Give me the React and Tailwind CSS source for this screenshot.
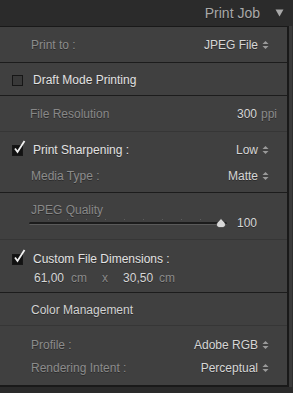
import React from 'react';

const font = { fontFamily: '"Liberation Sans", Arial, sans-serif' };

const Stepper = () => (
  <svg width="7" height="10" viewBox="0 0 7 10" className="ml-[4px] shrink-0">
    <path d="M3.5 1 L6.5 4 L0.5 4 Z" fill="#9a9a9a" />
    <path d="M3.5 9 L6.5 6 L0.5 6 Z" fill="#9a9a9a" />
  </svg>
);

const Checkbox = ({ checked }) => (
  <div className="relative w-[11px] h-[11px] shrink-0">
    <div
      className={
        'absolute inset-0 border border-[#161616] ' +
        (checked ? 'bg-[#121212]' : 'bg-[#393939]')
      }
    />
    {checked && (
      <svg width="14" height="15" viewBox="0 0 14 15" className="absolute left-[1px] top-[-5px]">
        <path d="M2 8.5 L4.5 12 L11.5 1" stroke="#f2f2f2" strokeWidth="1.8" fill="none" />
      </svg>
    )}
  </div>
);

const SelectRow = ({ label, value, className = '' }) => (
  <div className={'flex items-center justify-between pl-[31px] pr-[18px] ' + className}>
    <span className="text-[#8c8c8c]">{label}</span>
    <span className="flex items-center text-[#d6d6d6]">
      {value}
      <Stepper />
    </span>
  </div>
);

const Slider = () => {
  const ticks = [48, 67, 86, 105, 124, 143, 162, 181, 200];
  return (
    <div className="relative w-[198px] h-[12px]">
      <div className="absolute left-0 right-0 top-[5px] h-[3px] rounded-full bg-[#1c1c1c] border-b border-[#5a5a5a]" />
      {ticks.map((t) => (
        <div key={t} className="absolute top-[2px] w-px h-px bg-[#5c5c5c]" style={{ left: t - 29 }} />
      ))}
      <svg width="12" height="11" viewBox="0 0 12 11" className="absolute left-[186px] top-[1px]">
        <path d="M6 0.5 L10 5 Q11.5 8.5 8 9.5 L4 9.5 Q0.5 8.5 2 5 Z" fill="#d8d8d8" stroke="#2a2a2a" strokeWidth="0.6" />
      </svg>
    </div>
  );
};

export default function App() {
  return (
    <div className="w-[293px] h-[393px] bg-[#2a2a2a] text-[12px] overflow-hidden [text-shadow:0_1px_0_rgba(0,0,0,0.35)]" style={font}>
      <div className="h-[26px] flex items-center justify-end pr-[9px] bg-[#2b2b2b]">
        <span className="text-[14px] text-[#a9a9a9]">Print Job</span>
        <svg width="9" height="8" viewBox="0 0 9 8" className="ml-[15px]">
          <path d="M0.5 0.5 L8.5 0.5 L4.5 7.5 Z" fill="#a8a8a8" />
        </svg>
      </div>
      <div className="flex bg-[#3a3a3a]">
        <div className="w-[289px] bg-[#404040] border-t border-r-2 border-b-2 border-[#191919] flex flex-col">
          <SelectRow label="Print to :" value="JPEG File" className="h-[36px] border-b border-[#1c1c1c]" />

          <div className="h-[33px] flex items-center pl-[12px] pt-[2px] border-b border-[#1c1c1c]">
            <Checkbox />
            <span className="ml-[10px] text-[#e2e2e2]">Draft Mode Printing</span>
          </div>

          <div className="h-[36px] flex items-center justify-between pl-[30px] pr-[10px] pt-[1px] border-b border-[#363636]">
            <span className="text-[#888888]">File Resolution</span>
            <span>
              <span className="text-[#d6d6d6]">300</span>
              <span className="ml-[4px] text-[#8a8a8a]">ppi</span>
            </span>
          </div>

          <div className="h-[61px] flex flex-col border-b border-[#1c1c1c]">
            <div className="h-[34px] flex items-center justify-between pl-[12px] pr-[18px] pt-[2px]">
              <div className="flex items-center">
                <Checkbox checked />
                <span className="ml-[10px] text-[#e2e2e2]">Print Sharpening :</span>
              </div>
              <span className="flex items-center text-[#d6d6d6]">
                Low
                <Stepper />
              </span>
            </div>
            <SelectRow label="Media Type :" value="Matte" className="h-[18px] pl-[30px] mt-[1px]" />
          </div>

          <div className="h-[47px] flex flex-col border-b border-[#363636]">
            <div className="pl-[31px] pt-[10px] text-[#888888] leading-[14px]">JPEG Quality</div>
            <div className="flex items-center pl-[29px] mt-[-3px]">
              <Slider />
              <span className="ml-[10px] text-[#d6d6d6]">100</span>
            </div>
          </div>

          <div className="h-[53px] flex flex-col border-b border-[#1c1c1c]">
            <div className="flex items-center pl-[12px] pt-[11px] h-[27px]">
              <Checkbox checked />
              <span className="ml-[10px] text-[#e2e2e2]">Custom File Dimensions :</span>
            </div>
            <div className="flex items-center pl-[34px] mt-[3px] h-[16px]">
              <span className="text-[#d6d6d6]">61,00</span>
              <span className="ml-[7px] text-[#8a8a8a]">cm</span>
              <span className="ml-[15px] text-[#8a8a8a]">x</span>
              <span className="ml-[15px] text-[#d6d6d6]">30,50</span>
              <span className="ml-[6px] text-[#8a8a8a]">cm</span>
            </div>
          </div>

          <div className="h-[33px] flex items-center pl-[31px] pt-[2px] border-b border-[#363636]">
            <span className="text-[#d2d2d2]">Color Management</span>
          </div>

          <div className="h-[59px] flex flex-col justify-center gap-[5px] pt-[1px]">
            <SelectRow label="Profile :" value="Adobe RGB" className="h-[18px]" />
            <SelectRow label="Rendering Intent :" value="Perceptual" className="h-[18px]" />
          </div>
        </div>
        <div className="flex-1 border-r border-[#2e2e2e]" />
      </div>
    </div>
  );
}
